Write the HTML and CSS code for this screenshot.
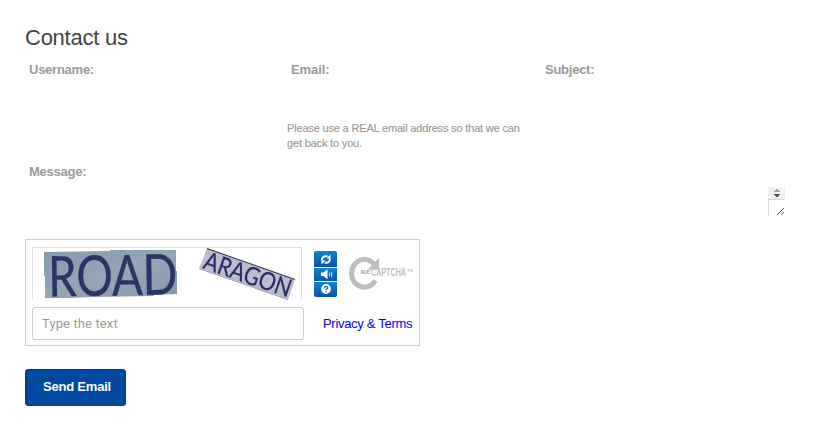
FILE: index.html
```html
<!DOCTYPE html>
<html lang="en">
<head>
<meta charset="utf-8">
<title>Contact us</title>
<link rel="stylesheet" href="styles.css">
</head>
<body>
<main class="contact">
  <h1 class="title">Contact us</h1>
  <div class="fields">
    <div class="label">Username:</div>
    <div class="email">
      <div class="label">Email:</div>
      <p class="hint">Please use a REAL email address so that we can<br>get back to you.</p>
    </div>
    <div class="label">Subject:</div>
  </div>
  <div class="label message-label">Message:</div>
  <div class="message">
    <svg class="message-controls" width="17" height="29" viewBox="0 0 17 29">
      <path d="M0 0h17v12H0z" fill="#f1f1f1"/>
      <path d="M0 12h17v1H1v16H0z" fill="#d9d9d9"/>
      <path d="M8 2h2v1h1v1h1v1H6V4h1V3h1z" fill="#a3a3a3"/>
      <path d="M6 7h6v1h-1v1h-1v1H8V9H7V8H6z" fill="#505050"/>
      <path d="M9 28l7-7M13 28l3-3" stroke="#606060" stroke-width="1"/>
    </svg>
  </div>
  <section class="captcha">
    <div class="words">
      <svg width="268" height="52" viewBox="33 248 268 52">
        <defs>
          <linearGradient id="slate" x2="1" y2="1"><stop stop-color="#829bb1"/><stop offset=".5" stop-color="#93a7b3"/><stop offset="1" stop-color="#8297ad"/></linearGradient>
          <clipPath id="left"><path d="M44 252L110 251 110 250 176 250 176 271 177 271 177 294 154 295 154 296 92 297 68 298 45 298 45 276 44 276z"/></clipPath>
          <clipPath id="right"><path d="M207 248L295 279 288 300 199 269z"/></clipPath>
          <filter id="soft" x="-10%" y="-10%" width="120%" height="120%"><feGaussianBlur stdDeviation=".6"/></filter>
        </defs>
        <path d="M43 249h136v50H43z" fill="url(#slate)" clip-path="url(#left)"/>
        <g filter="url(#soft)"><text class="road" transform="translate(48.500 296.500) rotate(-1)" textLength="129" lengthAdjust="spacingAndGlyphs">ROAD</text></g>
        <g clip-path="url(#right)">
          <path d="M196 247h102v54H196z" fill="#bcbdcb"/>
          <path d="M207 248l88 31" stroke="#343748" stroke-width="2"/>
          <path d="M199 269l89 31" stroke="#8a8ba0"/>
        </g>
        <g filter="url(#soft)"><text class="aragon" transform="translate(202 268) rotate(19)" textLength="91" lengthAdjust="spacingAndGlyphs">ARAGON</text></g>
      </svg>
    </div>
    <svg class="tools" width="23" height="46" viewBox="0 0 23 46">
      <defs><linearGradient id="blue" x2="0" y2="1"><stop stop-color="#0b86cf"/><stop offset="1" stop-color="#0754ab"/></linearGradient></defs>
      <path d="M2 0h19q2 0 2 2v14H0V2q0-2 2-2z" fill="url(#blue)"/>
      <path d="M0 17h23v13H0z" fill="url(#blue)"/>
      <path d="M0 31h23v13q0 2-2 2H2q-2 0-2-2z" fill="url(#blue)"/>
      <path d="M8 9.500C7.500 6 10.500 4.500 13.500 5.500M15.800 7.500c.5 3.200-2 4.700-5 4" fill="none" stroke="#fff" stroke-width="2"/>
      <path d="M12.500 7.500h4v-4zM11.500 9.500h-4v4z" fill="#fff"/>
      <path d="M7 21.500h2.500l4-3.200v10l-4-3.200H7z" fill="#fff"/>
      <path d="M15.500 21.800v3.600M17.700 21v5.200" stroke="#d5eafa" stroke-width="1"/>
      <circle cx="12" cy="38" r="4.900" fill="#fff"/>
      <path d="M10.500 37.200c0-2.300 3.200-2.300 3.200-.4 0 1.200-1.600 1-1.600 2.300M12.100 40v1.200" fill="none" stroke="#0868b9" stroke-width="1.300"/>
    </svg>
    <svg class="logo" width="65" height="36" viewBox="0 0 65 36">
      <path d="M25.200 10.500A12.800 13.800 0 1 0 26.300 26.500" fill="none" stroke="#bdbdbd" stroke-width="5"/>
      <path d="M30 4v11.500H18.500z" fill="#bdbdbd"/>
      <text class="re" x="11.500" y="20" textLength="10" lengthAdjust="spacingAndGlyphs">RE</text>
      <text class="brand" x="22" y="21.500" textLength="35" lengthAdjust="spacingAndGlyphs">CAPTCHA</text>
      <text class="tm" x="58" y="17.500" textLength="6" lengthAdjust="spacingAndGlyphs">TM</text>
    </svg>
    <input class="answer" type="text" placeholder="Type the text" aria-label="Type the text">
    <a class="terms">Privacy &amp; Terms</a>
  </section>
  <button class="send" type="button">Send Email</button>
</main>
</body>
</html>
```
FILE: styles.css
```css
* { box-sizing: border-box; }
body { margin: 0; background: #fff; font-family: "Liberation Sans", Arial, sans-serif; }
.contact { padding: 25px 25px 0; height: 422px; overflow: hidden; }
.title { margin: 0; font-size: 22px; line-height: 26px; font-weight: 400; color: #444; letter-spacing: -.25px; }
.fields { display: grid; grid-template-columns: 262px 254px 1fr; height: 101px; padding: 10px 0 0 4px; }
.label { font-size: 13px; line-height: 18px; font-weight: 700; color: #999; letter-spacing: -.25px; }
.email .label { letter-spacing: -.1px; }
.hint { margin: 42px 0 0 -4px; font-size: 11px; line-height: 15px; color: #999; letter-spacing: -.17px; white-space: nowrap; -webkit-text-stroke: .15px #999; }
.message-label { margin: 11px 0 0 4px; }
.message { display: flex; justify-content: flex-end; height: 36px; margin-top: 6px; padding-right: 5px; }
.message-controls { display: block; }
.captcha { display: grid; grid-template-columns: 272px 23px 65px; grid-template-rows: 52px 33px; column-gap: 10px; row-gap: 8px; width: 395px; height: 107px; margin-top: 16px; padding: 7px 6px; border: 1px solid #ccc; }
.words { width: 270px; height: 52px; border: 1px solid #ddd; border-bottom: 0; }
.words svg { display: block; }
.road { font: 56px Lato, sans-serif; fill: #2c3564; stroke: #2c3564; stroke-width: .4px; }
.aragon { font: 25px Lato, sans-serif; fill: #292c68; stroke: #292c68; stroke-width: .2px; }
.tools { margin-top: 4px; }
.logo { margin: 7px 0 0 2px; }
.re { font: 900 6px Lato, sans-serif; fill: #aaa; }
.brand { font: 700 11px "Liberation Sans", sans-serif; fill: #bdbdbd; }
.tm { font: 4px "Liberation Sans", sans-serif; fill: #aaa; }
.answer { width: 272px; height: 33px; padding: 0 9px; border: 1px solid #ccc; border-radius: 3px; font: 13px Roboto, sans-serif; letter-spacing: .12px; background: #fff; }
.answer::placeholder { color: #999; opacity: 1; }
.terms { grid-column: 2 / 4; margin-left: 9px; align-self: center; font-size: 13px; line-height: 16px; color: #00f; letter-spacing: -.3px; white-space: nowrap; }
.send { display: block; width: 101px; height: 37px; margin-top: 23px; padding: 0 0 2px 3px; border: 1px solid #003e83; border-radius: 3px; background: #0049a0; color: #fff; font: 700 13px "Liberation Sans", Arial, sans-serif; letter-spacing: -.2px; }
```
